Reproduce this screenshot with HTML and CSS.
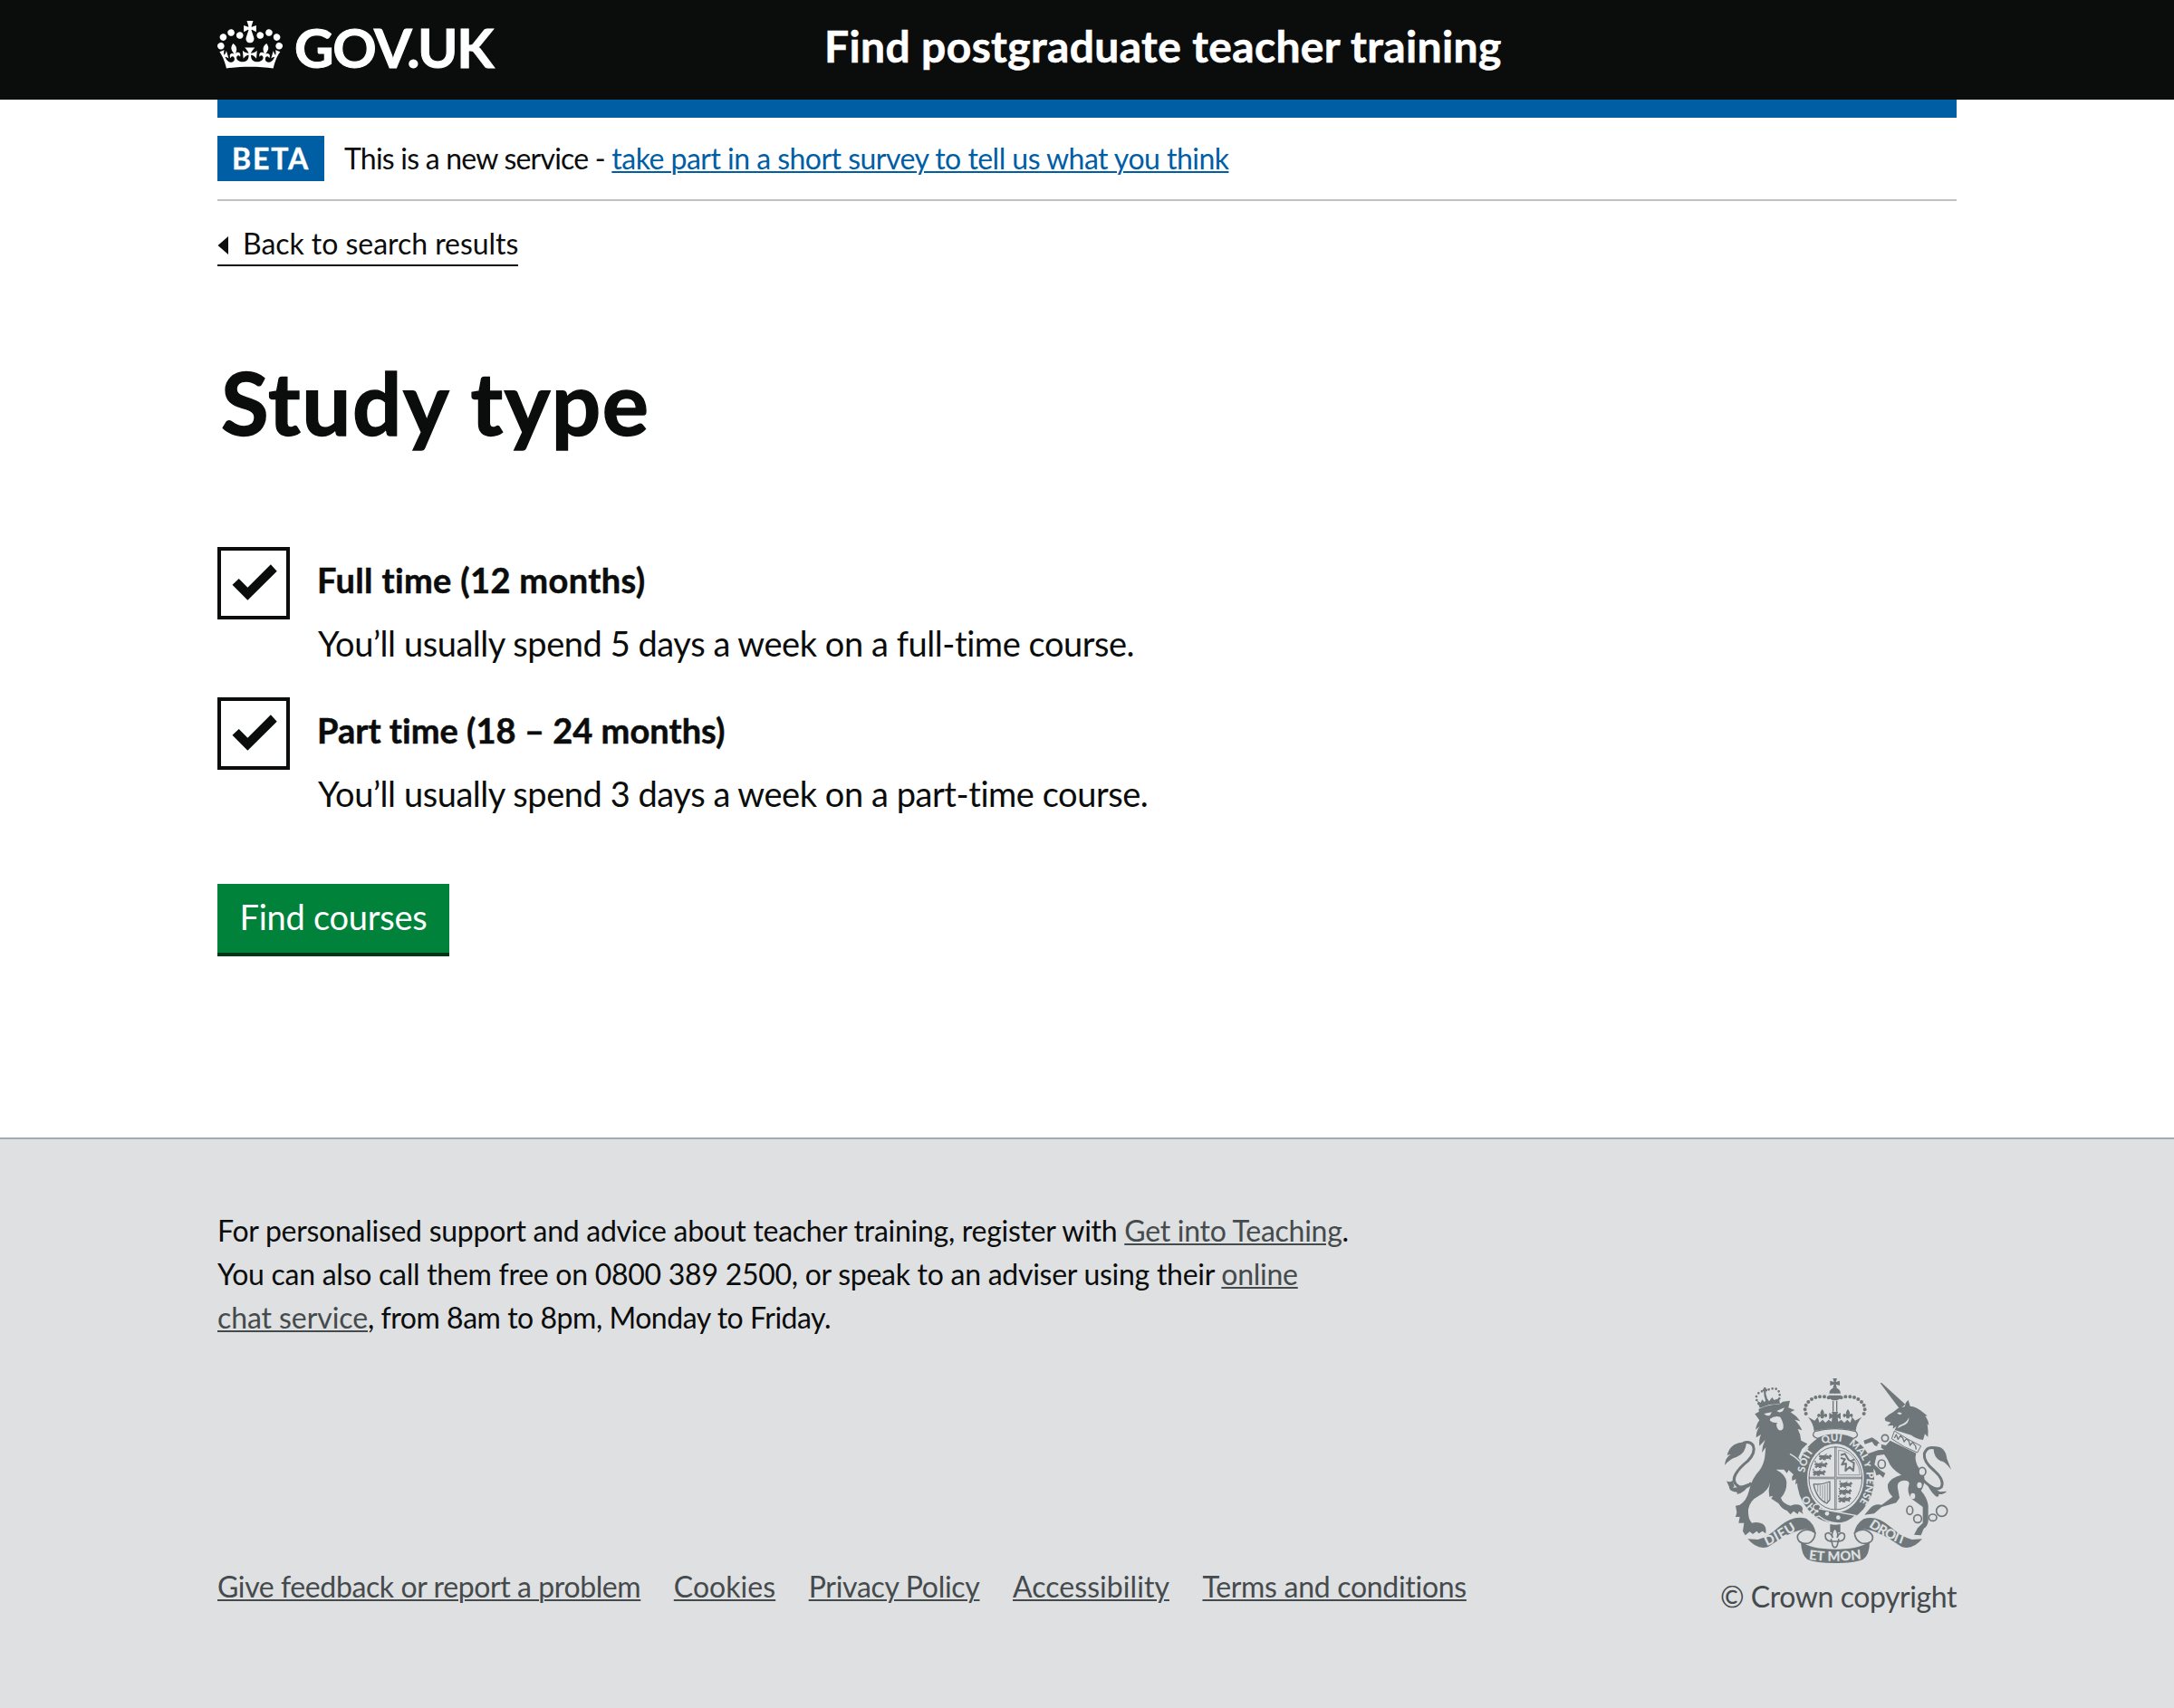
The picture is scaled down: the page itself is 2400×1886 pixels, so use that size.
FILE: index.html
```html
<!DOCTYPE html>
<html lang="en">
<head>
<meta charset="utf-8">
<title>Study type - Find postgraduate teacher training</title>
<link rel="stylesheet" href="styles.css">
</head>
<body>
<header class="header">
  <div class="container header-grid">
    <a class="logo" href="#">
      <svg class="logo-crown" viewBox="0 0 132 97" width="72" height="53" aria-hidden="true"><path fill="currentColor" fill-rule="evenodd" d="M25 30.2c3.5 1.5 7.7-.2 9.1-3.7 1.5-3.6-.2-7.8-3.9-9.2-3.6-1.4-7.6.3-9.1 3.9-1.4 3.5.3 7.5 3.9 9zM9 39.5c3.6 1.5 7.8-.2 9.2-3.7 1.5-3.6-.2-7.8-3.9-9.1-3.6-1.5-7.6.2-9.1 3.8-1.4 3.5.3 7.5 3.8 9zM4.4 57.2c3.5 1.5 7.7-.2 9.1-3.8 1.5-3.6-.2-7.7-3.9-9.1-3.5-1.5-7.6.3-9.1 3.8-1.4 3.5.3 7.6 3.9 9.1zm38.3-21.4c3.5 1.5 7.7-.2 9.1-3.8 1.5-3.6-.2-7.7-3.9-9.1-3.6-1.5-7.6.3-9.1 3.8-1.3 3.6.4 7.7 3.9 9.1zm64.4-5.6c-3.6 1.5-7.8-.2-9.1-3.7-1.5-3.6.2-7.8 3.8-9.2 3.6-1.4 7.7.3 9.2 3.9 1.3 3.5-.4 7.5-3.9 9zm15.9 9.3c-3.6 1.5-7.7-.2-9.1-3.7-1.5-3.6.2-7.8 3.7-9.1 3.6-1.5 7.7.2 9.2 3.8 1.5 3.5-.3 7.5-3.8 9zm4.7 17.7c-3.6 1.5-7.8-.2-9.2-3.8-1.5-3.6.2-7.7 3.9-9.1 3.6-1.5 7.7.3 9.2 3.8 1.3 3.5-.4 7.6-3.9 9.1zM89.3 35.8c-3.6 1.5-7.8-.2-9.2-3.8-1.4-3.6.2-7.7 3.9-9.1 3.6-1.5 7.7.3 9.2 3.8 1.4 3.6-.3 7.7-3.9 9.1zM69.7 17.7l8.9 4.7V9.3l-8.9 2.8c-.2-.3-.5-.6-.9-.9L72.4 0H59.6l3.5 11.2c-.3.3-.6.5-.9.9l-8.8-2.8v13.1l8.8-4.7c.3.3.6.7.9.9l-5 15.4v.1c-.2.8-.4 1.6-.4 2.4 0 4.1 3.1 7.5 7 8.1h.2c.3 0 .7.1 1 .1.4 0 .7 0 1-.1h.2c4-.6 7.1-4.1 7.1-8.1 0-.8-.1-1.7-.4-2.4V34l-5.1-15.4c.4-.2.7-.6 1-.9zM66 92.8c16.9 0 32.8 1.1 47.1 3.2 4-16.9 8.9-26.7 14-33.5l-9.6-3.4c1 4.9 1.1 7.2 0 10.2-1.5-1.4-3-4.3-4.2-8.7L108.6 76c2.8-2 5-3.2 7.5-3.3-4.4 9.4-10 11.9-13.6 11.2-4.3-.8-6.3-4.6-5.6-7.9 1-4.7 5.7-5.9 8-.5 4.3-8.7-3-11.4-7.6-8.8 7.1-7.2 7.9-13.5 2.1-21.1-8 6.1-8.1 12.3-4.5 20.8-4.7-5.4-12.1-2.5-9.5 6.2 3.4-5.2 7.9-2 7.2 3.1-.6 4.3-6.4 7.8-13.5 7.2-10.3-.9-10.9-8-11.2-13.8 2.5-.5 7.1 1.8 11 7.3L80.2 60c-4.1 4.4-8 5.3-12.3 5.4 1.4-4.4 8-11.6 8-11.6H55.5s6.4 7.2 7.9 11.6c-4.2-.1-8-1-12.3-5.4l1.4 16.4c3.9-5.5 8.5-7.7 10.9-7.3-.3 5.8-.9 12.8-11.1 13.8-7.2.6-12.9-2.9-13.5-7.2-.7-5 3.8-8.3 7.1-3.1 2.7-8.7-4.6-11.6-9.4-6.2 3.7-8.5 3.6-14.7-4.6-20.8-5.8 7.6-5 13.9 2.2 21.1-4.7-2.6-11.9.1-7.7 8.8 2.3-5.5 7.1-4.2 8.1.5.7 3.3-1.3 7.1-5.7 7.9-3.5.7-9-1.8-13.5-11.2 2.5.1 4.7 1.3 7.5 3.3l-4.7-15.4c-1.2 4.4-2.7 7.2-4.3 8.7-1.1-3-.9-5.3 0-10.2l-9.5 3.4c5 6.9 9.9 16.7 14 33.5 14.8-2.1 30.8-3.2 47.7-3.2z"/></svg>
      <span class="logo-text">GOV.UK</span>
    </a>
    <a class="service-name" href="#">Find postgraduate teacher training</a>
  </div>
</header>

<div class="container">
  <div class="header-bar"></div>
  <div class="phase">
    <strong class="tag">BETA</strong>
    <span class="phase-text">This is a new service - <a class="phase-link" href="#">take part in a short survey to tell us what you think</a></span>
  </div>
  <a class="back" href="#"><svg class="back-arrow" viewBox="0 0 12 20" width="12" height="20" aria-hidden="true"><path d="M0.5 10 12 0v20z"/></svg>Back to search results</a>

  <main class="main">
    <h1 class="title">Study type</h1>
    <form class="form">
      <div class="option">
        <span class="checkbox" role="checkbox" aria-checked="true"><svg viewBox="0 0 80 80" width="80" height="80"><path d="M16.5 41.7 23.7 35 33.4 44.7 58.9 19.3 65.7 26.7 33.4 58.7z"/></svg></span>
        <div class="option-text">
          <label class="label label-full">Full time (12 months)</label>
          <span class="hint">You’ll usually spend 5 days a week on a full-time course.</span>
        </div>
      </div>
      <div class="option">
        <span class="checkbox" role="checkbox" aria-checked="true"><svg viewBox="0 0 80 80" width="80" height="80"><path d="M16.5 41.7 23.7 35 33.4 44.7 58.9 19.3 65.7 26.7 33.4 58.7z"/></svg></span>
        <div class="option-text">
          <label class="label">Part time (18 – 24 months)</label>
          <span class="hint">You’ll usually spend 3 days a week on a part-time course.</span>
        </div>
      </div>
      <button class="button" type="button">Find courses</button>
    </form>
  </main>
</div>

<footer class="footer">
  <div class="container">
    <p class="support">For personalised support and advice about teacher training, register with <a href="#">Get into Teaching</a>.<br>You can also call them free on 0800 389 2500, or speak to an adviser using their <a href="#">online<br><span class="chat">chat service</span></a><span class="hours">, from 8am to 8pm, Monday to Friday.</span></p>
    <div class="meta">
      <ul class="links">
        <li><a href="#">Give feedback or report a problem</a></li>
        <li class="wide"><a href="#">Cookies</a></li>
        <li class="medium"><a href="#">Privacy Policy</a></li>
        <li class="wide"><a href="#">Accessibility</a></li>
        <li class="medium"><a href="#">Terms and conditions</a></li>
      </ul>
      <div class="copyright">
        <svg class="crest" viewBox="72 66 750 612" width="250" height="204" aria-hidden="true">
          <defs>
            <path id="garter" d="M439 520A103 123 0 0 1 439 274A103 123 0 0 1 439 520"/>
            <path id="dieu" d="M212 621Q262 600 326 557"/>
            <path id="droit" d="M548 557Q610 600 676 620"/>
            <path id="etmon" d="M350 666Q437 677 530 664"/>
            <g id="fleur"><path d="M0-19Q9-9 5 0Q12-8 16-1Q18 8 9 9Q12 4 7 4L4 12H-4L-7 4Q-12 4-9 9Q-18 8-16-1Q-12-8-5 0Q-9-9 0-19Z"/></g>
            <g id="pattee"><path d="M-7-16H7L3-4L16-8V8L3 4L7 16H-7L-3 4L-16 8V-8L-3-4Z"/></g>
            <g id="passant"><path d="M2 7Q8 1 14 5L24 3L34 6L40 1L44 6L38 10L40 16L34 13L22 13L24 18L16 17L14 12L8 18L3 15L9 11ZM5 2Q0-3 5-5M22 3L28-3"/></g>
          </defs>

          <!-- lion -->
          <g class="ink">
            <path d="M188 164L180 140L191 147L196 136L204 145L212 132L219 142L229 129L236 138L252 132L255 151L220 153Z"/>
            <path d="M172 184L186 176L184 168Q215 152 252 152L265 143L288 140L283 163L304 171L290 178Q310 190 322 208L304 203Q322 222 328 238L314 234Q324 252 325 272L346 283L328 300L316 328L328 348Q345 370 342 392L350 404L341 409L338 422L330 410L320 425L318 408L306 418L308 400L296 405Q292 392 300 385L284 370L278 380L268 368L242 368Q275 385 277 410Q278 440 258 462Q264 482 290 488Q310 480 325 488Q334 498 328 505L332 515L318 506L314 516L300 506L290 517L278 504Q262 500 250 480L226 464L232 455L220 458L218 438L222 412Q216 440 185 455Q155 470 150 500Q148 530 162 545Q182 540 198 548Q211 556 208 580L197 572L185 580L178 572L165 582L155 574L140 586L132 572L136 545L118 545L122 525L108 525L112 510L108 488L122 485Q145 470 152 440Q160 400 188 370Q202 350 205 325L208 295L195 312Q196 290 206 270L187 290Q184 270 192 252L176 262Q176 240 188 225L174 236Q178 215 187 205Z"/>
            <path d="M72 354Q74 328 92 318L80 320Q90 282 128 278L144 278Q142 314 112 326Q86 334 72 354Z"/>
            <path d="M78 406Q90 412 98 404L104 424Q90 440 88 426Q104 432 126 423L156 412Q140 446 112 450Q118 442 104 442Q88 440 86 424Z"/>
          </g>
          <path class="line w9" d="M160 412Q148 432 118 424Q94 410 108 384Q120 362 148 340Q176 312 166 288Q154 272 132 281"/>
          <g class="dots">
            <path d="M184 150v0M178 138v0M177 126v0M184 115v0M195 109v0M218 103v0M230 100v0M242 101v0M251 109v0M254 121v0M253 133v0"/>
          </g>
          <path class="line w5" d="M205 96V118M198 105H213M205 118L213 148"/>
          <g class="paper">
            <path d="M202 183L228 178L222 188Q212 193 202 183ZM244 174L270 163L264 175Q254 182 244 174Z"/>
            <path d="M222 200Q238 188 256 194L262 206Q268 218 266 232Q258 244 248 234Q240 220 246 212Q234 216 222 206Z"/>
          </g>
          <path class="paperline w4" d="M288 316Q316 332 328 352"/>

          <!-- central crown -->
          <g class="ink">
            <use href="#pattee" x="437" y="82"/>
            <path d="M437 97Q454 99 456 116H418Q420 99 437 97ZM416 122H458Q456 139 437 139Q418 139 416 122Z"/>
            <path d="M368 240Q366 215 348 194L370 206L380 194L386 213L396 203L406 213L416 203L426 210L428 196L418 202V180L430 186L426 177H448L444 186L456 180V202L446 196L448 210L458 203L468 213L478 203L488 213L494 194L504 206L526 194Q508 215 506 240Q437 224 368 240Z"/>
            <use href="#fleur" x="395" y="187"/><use href="#fleur" x="480" y="187"/>
          </g>
          <path class="line w4" d="M431 140V176M443 140V176M437 99V116"/>
          <g class="dots big">
            <path d="M416 130v0M402 127v0M387 127v0M373 129v0M360 135v0M349 144v0M341 155v0M338 169v0M341 183v0M458 130v0M472 127v0M487 127v0M501 129v0M514 135v0M525 144v0M533 155v0M536 169v0M533 183v0"/>
          </g>

          <!-- garter -->
          <ellipse class="band" cx="439" cy="397" rx="111" ry="131"/>
          <ellipse class="line w3" cx="439" cy="397" rx="88" ry="104"/>
          <path class="cushion" d="M370 242Q437 224 506 242Q520 258 498 265Q437 238 380 265Q356 258 370 242Z"/>
          <path class="line w5" d="M351 396H527M439 293V500"/>
          <path class="paperline w2" d="M354 396H524M439 296V498"/>
          <g class="ink beasts">
            <use href="#passant" x="382" y="318"/><use href="#passant" x="368" y="344"/><use href="#passant" x="362" y="370"/>
            <use href="#passant" x="450" y="409"/><use href="#passant" x="448" y="433"/><use href="#passant" x="446" y="458"/>
          </g>
          <path class="line w6" d="M456 320L470 316L482 336L500 346L498 372L486 360L472 372L474 348L460 352L470 334L456 330M490 340L502 334"/>
          <path class="line w2" d="M449 304Q486 306 506 340Q518 358 520 386H449Z"/>
          <path class="line w4" d="M366 416Q390 420 420 408V468L410 480Q376 466 366 416"/>
          <path class="line w2" d="M380 420V442M388 420V456M396 420V466M404 418V474M412 414V476"/>
          <g class="motto ring">
            <text><textPath href="#garter" startOffset="68">HO</textPath></text>
            <text><textPath href="#garter" startOffset="196">SOIT</textPath></text>
            <text><textPath href="#garter" startOffset="312">QUI</textPath></text>
            <text><textPath href="#garter" startOffset="400">MAL</textPath></text>
            <text><textPath href="#garter" startOffset="478">Y</textPath></text>
            <text><textPath href="#garter" startOffset="512">PENSE</textPath></text>
          </g>
          <path class="buckle" d="M368 486Q384 478 390 492L386 498L506 520Q480 546 448 546Q410 544 384 522Q366 532 366 514Q374 514 372 502Q362 498 368 486Z"/>
          <g class="paper"><circle cx="411" cy="514" r="7"/><circle cx="448" cy="527" r="7"/><circle cx="378" cy="506" r="5"/></g>

          <!-- pendant -->
          <path class="ink" d="M421 549Q437 553 455 549V576H421Z"/>
          <path class="pendant" d="M437 562Q452 578 444 594Q454 570 468 582Q474 602 452 606Q448 604 450 598L446 614Q444 626 437 626Q430 626 428 614L424 598Q426 604 422 606Q402 602 406 582Q420 570 430 594Q422 578 437 562ZM422 606H452"/>

          <!-- unicorn -->
          <path class="line w9" d="M726 400Q770 446 790 426Q800 402 766 372Q730 342 733 316Q742 288 772 298"/>
          <g class="ink">
            <path d="M587 82L592 81L670 152L652 168Z"/>
            <path d="M668 160L672 146L680 138L686 158Q706 160 720 172L743 190L736 191Q747 204 748 222L743 216Q747 240 745 260L735 250L729 270Q704 266 690 254L635 237L641 224L629 233L630 222L611 223L622 212L604 207L602 198Q615 185 630 178L646 165Z"/>
            <path d="M620 272L706 314Q698 340 717 365Q737 385 733 408Q730 428 722 438Q742 460 746 487L746 540Q744 556 731 564L722 586L699 584L711 562L728 545L728 492L690 464Q674 440 682 420Q688 404 664 404Q640 408 645 430L651 462L640 478L592 492L567 514L535 518L552 498Q566 480 592 485L628 458Q610 442 612 418Q622 394 657 386Q622 366 612 336L600 318L575 322L568 352L590 372L604 380L597 395L585 384L574 388L570 372L556 356L552 330L546 316L580 304L600 302L590 296L568 288L560 276L536 284L532 272L560 262Q578 272 588 284L606 288Z"/>
            <path d="M758 293Q802 286 808 332L822 368Q800 340 787 340Q764 328 764 300Z"/>
            <path d="M742 416L785 442L808 440Q796 452 780 450Q784 458 774 458Q758 448 742 416Z"/>
          </g>
          <path class="paper" d="M643 181Q650 176 659 182Q652 190 643 181ZM682 195Q684 218 658 224L644 232L650 222Q676 214 682 195Z"/>
          <path class="collar" d="M634 240Q676 268 722 290L710 312Q666 296 625 266Z"/>
          <path class="line w4" d="M634 264L640 252L646 268L654 256L662 264L666 276L674 266L682 274L686 288L694 278L704 290L706 302"/>
          <g class="chain">
            <circle cx="603" cy="264" r="11"/><ellipse cx="592" cy="350" rx="12" ry="14"/><ellipse cx="726" cy="375" rx="12" ry="14"/>
            <ellipse cx="685" cy="503" rx="10" ry="14"/><circle cx="711" cy="531" r="13"/><ellipse cx="761" cy="527" rx="13" ry="11"/><circle cx="791" cy="505" r="18"/>
          </g>
          <g class="paper"><ellipse cx="584" cy="290" rx="7" ry="9"/><ellipse cx="717" cy="420" rx="8" ry="10"/><ellipse cx="695" cy="456" rx="8" ry="10"/></g>

          <!-- motto scroll -->
          <path class="scroll" d="M372 578Q350 560 328 572Q306 584 316 602Q322 616 350 612Q370 604 372 578ZM502 578Q524 560 546 572Q568 584 560 602Q552 616 526 612Q504 604 502 578Z"/>
          <g class="ink">
            <path d="M148 598L182 600Q212 594 256 554Q300 518 342 530Q370 548 374 580Q358 564 334 566Q300 572 262 594L216 624Q180 636 148 598Z"/>
            <path d="M726 598L692 600Q662 594 618 556Q574 518 532 532Q506 548 500 580Q516 564 540 566Q574 572 612 594L658 624Q694 636 726 598Z"/>
            <path d="M324 606Q356 632 437 632Q520 632 552 606Q552 652 530 666Q500 678 437 678Q374 678 346 666Q326 652 324 606Z"/>
          </g>
          <g class="motto banner">
            <text textLength="112"><textPath href="#dieu">DIEU</textPath></text>
            <text textLength="132"><textPath href="#droit">DROIT</textPath></text>
            <text textLength="176"><textPath href="#etmon">ET MON</textPath></text>
          </g>
        </svg>
        <a class="copyright-text" href="#">© Crown copyright</a>
      </div>
    </div>
  </div>
</footer>
</body>
</html>
```

FILE: styles.css
```css
* { box-sizing: border-box; }

body {
  margin: 0;
  background: #fff;
  color: #0b0c0c;
  font-family: Lato, "Liberation Sans", sans-serif;
  font-size: 32px;
  line-height: 48px;
  font-variant-ligatures: none;
}

a {
  color: inherit;
  text-decoration-thickness: 2px;
  text-underline-offset: 2px;
}

.container { width: 1920px; margin: 0 auto; }

/* Header */
.header { height: 110px; background: #0b0c0c; color: #fff; }
.header-grid { display: grid; grid-template-columns: 670px 1fr; align-items: start; }
.logo { display: flex; align-items: flex-start; gap: 13px; padding-top: 22px; text-decoration: none; }
.logo-crown { margin-top: 1px; }
.logo-text { font-size: 60px; line-height: 60px; font-weight: 700; letter-spacing: -1.3px; -webkit-text-stroke: 1px; }
.service-name {
  padding-top: 21px;
  font-size: 48px;
  line-height: 60px;
  font-weight: 700;
  letter-spacing: 0.36px;
  -webkit-text-stroke: 0.6px;
  text-decoration: none;
}
.header-bar { height: 20px; background: #005ea5; }

/* Phase banner */
.phase { display: flex; align-items: center; gap: 22px; padding: 20px 0; border-bottom: 2px solid #bfc1c3; }
.tag {
  width: 118px;
  height: 50px;
  background: #005ea5;
  color: #fff;
  line-height: 49px;
  text-align: center;
  letter-spacing: 1.8px;
  -webkit-text-stroke: 0.4px;
}
.phase-text { line-height: 49px; height: 50px; letter-spacing: -0.78px; white-space: pre; }
.phase-link { color: #005ea5; letter-spacing: -0.53px; }

.back {
  display: inline-flex;
  align-items: center;
  gap: 16px;
  margin-top: 27px;
  padding-bottom: 3px;
  border-bottom: 2px solid #0b0c0c;
  line-height: 40px;
  letter-spacing: -0.04px;
  text-decoration: none;
}
.back-arrow { fill: #0b0c0c; margin-top: 3px; }

/* Form */
.main { padding-top: 100px; }
.title { margin: 0; padding-left: 4px; font-size: 96px; line-height: 100px; letter-spacing: 1.5px; -webkit-text-stroke: 1.4px; }
.form { padding-top: 110px; font-size: 38px; }
.option { display: flex; gap: 31px; margin-bottom: 36px; }
.checkbox { display: flex; width: 80px; height: 80px; box-shadow: inset 0 0 0 4px #0b0c0c; fill: #0b0c0c; }
.option-text { display: grid; grid-template-rows: 80px 50px; }
.label { margin-left: -1px; font-weight: 700; line-height: 72px; letter-spacing: 0.02px; -webkit-text-stroke: 0.5px; }
.label-full { letter-spacing: 0.34px; }
.hint { line-height: 52px; letter-spacing: -0.45px; }
.button {
  display: block;
  width: 256px;
  height: 80px;
  margin-top: 76px;
  padding: 0 0 4px;
  border: 0;
  border-bottom: 4px solid #003618;
  background: #00823b;
  color: #fff;
  font: inherit;
  line-height: 72px;
  letter-spacing: -0.25px;
}

/* Footer */
.footer {
  height: 630px;
  margin-top: 200px;
  padding-top: 77px;
  border-top: 2px solid #a1acb2;
  background: #dee0e2;
}
.support { margin: 0; letter-spacing: -0.27px; white-space: nowrap; }
.support a { color: #454a4c; }
.chat { letter-spacing: -0.08px; }
.hours { letter-spacing: -0.47px; }
.meta { display: flex; justify-content: space-between; align-items: flex-end; margin-top: 43px; color: #454a4c; }
.links { display: flex; gap: 36.5px; margin: 0; padding: 0 0 10px; list-style: none; letter-spacing: -0.4px; }
.links .wide { letter-spacing: 0.05px; }
.links .medium { letter-spacing: -0.3px; }
.copyright { display: flex; flex-direction: column; align-items: center; gap: 13px; margin-bottom: -1px; }
.copyright-text { letter-spacing: -0.43px; text-decoration: none; }

/* Royal arms */
.crest { display: block; }
.ink { fill: #6f777b; }
.paper { fill: #dee0e2; }
.line { fill: none; stroke: #6f777b; stroke-linejoin: round; }
.paperline { fill: none; stroke: #dee0e2; }
.w2 { stroke-width: 2; }
.w3 { stroke-width: 3; }
.w4 { stroke-width: 4; }
.w5 { stroke-width: 7; }
.w6 { stroke-width: 6; }
.w9 { stroke-width: 9; }
.dots { fill: none; stroke: #6f777b; stroke-width: 8; stroke-linecap: round; }
.dots.big { stroke-width: 12; }
.band { fill: #dee0e2; stroke: #6f777b; stroke-width: 34; }
.cushion { fill: #dee0e2; stroke: #6f777b; stroke-width: 4; }
.buckle { fill: #6f777b; stroke: #dee0e2; stroke-width: 4; }
.pendant { fill: #dee0e2; stroke: #6f777b; stroke-width: 5; }
.collar { fill: #dee0e2; stroke: #6f777b; stroke-width: 3; }
.chain { fill: #dee0e2; stroke: #6f777b; stroke-width: 5; }
.scroll { fill: #dee0e2; stroke: #6f777b; stroke-width: 5; }
.beasts { stroke: #6f777b; stroke-width: 3; }
.motto { fill: #dee0e2; font-weight: 900; }
.ring { font-size: 34px; }
.banner { font-size: 44px; }
```
